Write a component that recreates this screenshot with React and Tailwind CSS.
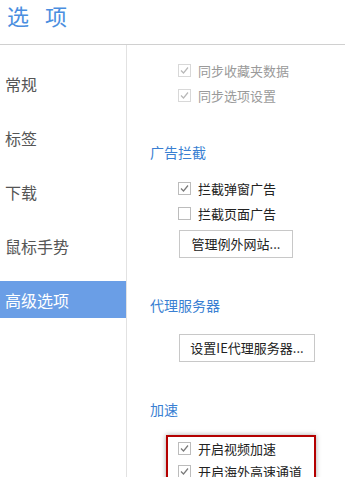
import React from "react";

const font = { fontFamily: '"Microsoft YaHei", "Noto Sans CJK SC", "Noto Sans", sans-serif' };

function Check({ checked, disabled }) {
    const border = disabled ? "border-[#d8d8d8]" : "border-[#bcbcbc]";
    const stroke = disabled ? "#b8b8b8" : "#7a7a7a";
    return (
        <span className={`w-[13px] h-[13px] border ${border} bg-white flex items-center justify-center shrink-0`}>
            {checked && (
                <svg width="11" height="11" viewBox="0 0 11 11">
                    <polyline points="2,5.5 4.5,8 9,2.5" fill="none" stroke={stroke} strokeWidth="1.2" />
                </svg>
            )}
        </span>
    );
}

function Row({ label, checked, disabled, h = "h-[25px]" }) {
    return (
        <div className={`flex items-center gap-[7px] ${h}`}>
            <Check checked={checked} disabled={disabled} />
            <span className={`text-[13px] leading-none ${disabled ? "text-[#9a9a9a]" : "text-[#222]"}`}>{label}</span>
        </div>
    );
}

function Heading({ children, mt }) {
    return (
        <div className={`h-[20px] flex items-center text-[14px] text-[#3a7fd2] ml-[23px] ${mt}`}>{children}</div>
    );
}

function Btn({ children, w, mt }) {
    return (
        <div className={`ml-[52px] ${mt} h-[28px] ${w} border border-[#c8c8c8] bg-white flex items-center justify-center text-[13px] text-[#222]`}>
            {children}
        </div>
    );
}

const tabs = ["常规", "标签", "下载", "鼠标手势", "高级选项"];

export default function App() {
    return (
        <div className="w-[345px] h-[477px] bg-white overflow-hidden" style={font}>
            <div className="h-[45px] border-b border-[#d0d0d0] flex items-start pt-[4px] pl-[7px] gap-[16px] text-[22px] leading-none text-[#4a8ee0]">
                <span>选</span>
                <span>项</span>
            </div>
            <div className="flex">
                <div className="w-[127px] h-[432px] border-r border-[#e2e2e2] pt-[20px] shrink-0">
                    {tabs.map((t, i) => (
                        <div
                            key={t}
                            className={`h-[37px] mb-[17px] flex items-center pl-[5px] text-[16px] ${i === 4 ? "bg-[#6a9ee6] text-white" : "text-[#555]"}`}
                        >
                            {t}
                        </div>
                    ))}
                </div>
                <div className="flex-1 pt-[13px]">
                    <div className="ml-[51px]">
                        <Row label="同步收藏夹数据" checked disabled />
                        <Row label="同步选项设置" checked disabled />
                    </div>
                    <Heading mt="mt-[34px]">广告拦截</Heading>
                    <div className="ml-[51px] mt-[14px]">
                        <Row label="拦截弹窗广告" checked />
                        <Row label="拦截页面广告" />
                    </div>
                    <Btn w="w-[114px]" mt="mt-[4px]">管理例外网站...</Btn>
                    <Heading mt="mt-[37px]">代理服务器</Heading>
                    <Btn w="w-[136px]" mt="mt-[19px]">设置IE代理服务器...</Btn>
                    <Heading mt="mt-[37px]">加速</Heading>
                    <div className="ml-[39px] mt-[16px] w-[150px] h-[60px] border-2 border-[#b40000] pl-[10px] shadow-[0_0_5px_rgba(0,0,0,0.35)]">
                        <Row label="开启视频加速" checked h="h-[23px]" />
                        <Row label="开启海外高速通道" checked h="h-[23px]" />
                    </div>
                </div>
            </div>
        </div>
    );
}
